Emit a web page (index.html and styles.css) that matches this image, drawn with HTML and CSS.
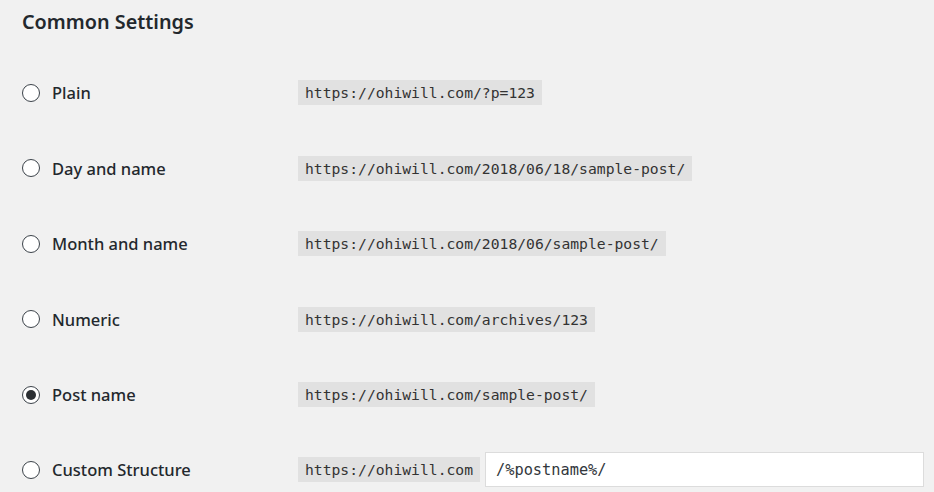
FILE: index.html
```html
<!DOCTYPE html>
<html>
<head>
<meta charset="utf-8">
<link rel="stylesheet" href="styles.css">
</head>
<body>
<div class="page">
  <h2 class="title">Common Settings</h2>
  <div class="rows">
    <div class="row">
      <label class="opt"><span class="radio"></span><span class="lbl">Plain</span></label>
      <code class="code">https://ohiwill.com/?p=123</code>
    </div>
    <div class="row">
      <label class="opt"><span class="radio"></span><span class="lbl">Day and name</span></label>
      <code class="code">https://ohiwill.com/2018/06/18/sample-post/</code>
    </div>
    <div class="row">
      <label class="opt"><span class="radio"></span><span class="lbl">Month and name</span></label>
      <code class="code">https://ohiwill.com/2018/06/sample-post/</code>
    </div>
    <div class="row">
      <label class="opt"><span class="radio"></span><span class="lbl">Numeric</span></label>
      <code class="code">https://ohiwill.com/archives/123</code>
    </div>
    <div class="row">
      <label class="opt"><span class="radio checked"></span><span class="lbl">Post name</span></label>
      <code class="code">https://ohiwill.com/sample-post/</code>
    </div>
    <div class="row">
      <label class="opt"><span class="radio"></span><span class="lbl">Custom Structure</span></label>
      <code class="code">https://ohiwill.com</code>
      <div class="input">/%postname%/</div>
    </div>
  </div>
</div>
</body>
</html>
```
FILE: styles.css
```css
html, body {
  margin: 0;
  padding: 0;
  background: #f1f1f1;
}
body {
  width: 934px;
  height: 492px;
  overflow: hidden;
  font-family: "Noto Sans", "Open Sans", sans-serif;
  color: #23282d;
}
.page {
  padding: 0 0 0 22px;
}
.title {
  margin: 0;
  height: 44px;
  line-height: 44px;
  font-size: 19.8px;
  font-weight: 600;
  color: #23282d;
}
.rows {
  margin-top: 11.3px;
  display: flex;
  flex-direction: column;
}
.row {
  height: 75.4px;
  display: flex;
  align-items: center;
}
.opt {
  width: 276px;
  display: flex;
  align-items: center;
}
.radio {
  width: 16px;
  height: 16px;
  border: 1.5px solid #3c434a;
  border-radius: 50%;
  background: #fff;
  box-sizing: content-box;
  display: flex;
  align-items: center;
  justify-content: center;
  margin-right: 12px;
}
.radio.checked::after {
  content: "";
  width: 10px;
  height: 10px;
  border-radius: 50%;
  background: #2b2f33;
}
.lbl {
  font-size: 16.5px;
  font-weight: 500;
  color: #23282d;
}
.code {
  font-family: "DejaVu Sans Mono", "Liberation Mono", monospace;
  font-size: 14.7px;
  line-height: 25px;
  height: 25px;
  padding: 0 7px;
  background: #e1e1e1;
  color: #333;
}
.input {
  margin-left: 5px;
  width: 439px;
  height: 35px;
  box-sizing: border-box;
  border: 1px solid #dcdcdc;
  background: #fff;
  padding: 0 10px;
  display: flex;
  align-items: center;
  font-family: "DejaVu Sans Mono", "Liberation Mono", monospace;
  font-size: 15.3px;
  color: #32373c;
}
```
